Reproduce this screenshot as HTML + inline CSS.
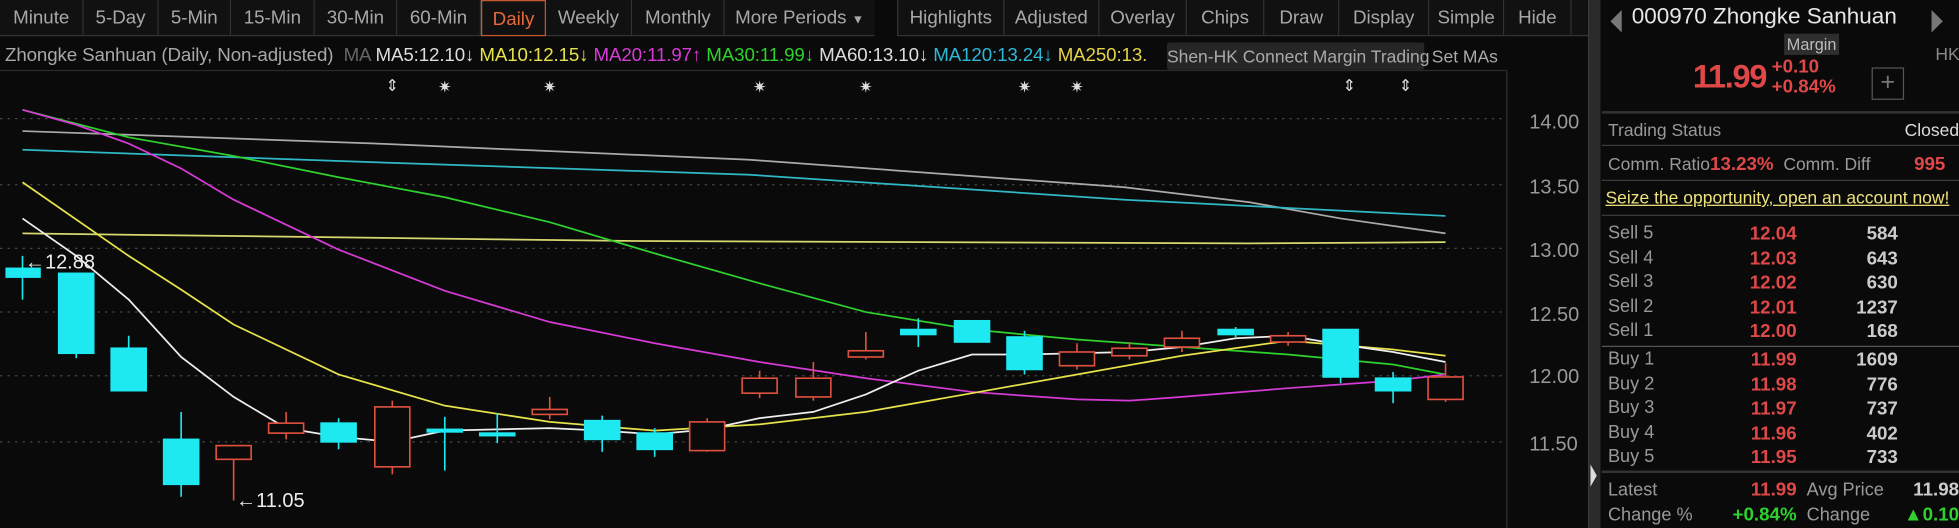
<!DOCTYPE html>
<html><head><meta charset="utf-8"><style>
html,body{margin:0;padding:0;background:#0a0a0a;overflow:hidden;width:1959px;height:528px}
#s{position:absolute;left:0;top:0;width:1568px;height:423px;transform:scale(1.2494,1.2482);transform-origin:0 0;background:#0a0a0a;font-family:"Liberation Sans Narrow","Liberation Sans",sans-serif;color:#aaa}
.tb{position:absolute;top:0;height:29px;border-right:1px solid #333;border-bottom:1px solid #333;font-size:15px;line-height:29px;text-align:center;color:#a8a8a8;box-sizing:border-box;background:#111}
.a{position:absolute;white-space:nowrap}
.rp{font-family:"Liberation Sans",sans-serif}
.hl{position:absolute;left:1282px;width:286px;height:1px;background:#3a3a3a}
</style></head><body><div id="s">
<div class="tb" style="left:0;width:67px">Minute</div>
<div class="tb" style="left:67px;width:60px">5-Day</div>
<div class="tb" style="left:127px;width:58px">5-Min</div>
<div class="tb" style="left:185px;width:67px">15-Min</div>
<div class="tb" style="left:252px;width:66px">30-Min</div>
<div class="tb" style="left:318px;width:67px">60-Min</div>
<div class="tb" style="left:385px;width:52px;color:#e8693a;border:1px solid #c5582f">Daily</div>
<div class="tb" style="left:437px;width:69px">Weekly</div>
<div class="tb" style="left:506px;width:74px">Monthly</div>
<div class="tb" style="left:580px;width:120px;border-right:none">More Periods <span style="font-size:10px">▼</span></div>
<div class="tb" style="left:700px;width:18px;background:#0a0a0a;border-right:none;border-bottom:none"></div>
<div class="tb" style="left:718px;width:86px;border-left:1px solid #333">Highlights</div>
<div class="tb" style="left:804px;width:76px">Adjusted</div>
<div class="tb" style="left:880px;width:70px">Overlay</div>
<div class="tb" style="left:950px;width:62px">Chips</div>
<div class="tb" style="left:1012px;width:60px">Draw</div>
<div class="tb" style="left:1072px;width:72px">Display</div>
<div class="tb" style="left:1144px;width:60px">Simple</div>
<div class="tb" style="left:1204px;width:54px">Hide</div>
<div class="tb" style="left:1258px;width:14px;border-right:1px solid #333"></div>
<div style="position:absolute;left:0;top:56px;width:1206px;height:1px;background:#2a2a2a"></div>
<div class="a" style="left:4px;top:36px;font-size:15px;letter-spacing:-0.1px">
<span style="color:#a8a8a8">Zhongke Sanhuan (Daily, Non-adjusted)</span>&nbsp;&nbsp;<span style="color:#666">MA</span> <span style="color:#ddd">MA5:12.10↓</span> <span style="color:#e6e24a">MA10:12.15↓</span> <span style="color:#d63bd6">MA20:11.97↑</span> <span style="color:#2ed12e">MA30:11.99↓</span> <span style="color:#ddd">MA60:13.10↓</span> <span style="color:#2fb8d6">MA120:13.24↓</span> <span style="color:#e6d24a">MA250:13.</span></div>
<div class="a" style="left:934px;top:34px;width:206px;height:22px;background:#262626;border-radius:2px;font-size:14px;line-height:22px;text-align:center;color:#aaa">Shen-HK Connect Margin Trading</div>
<div class="a" style="left:1146px;top:37px;font-size:14px;color:#aaa">Set MAs</div>
<svg class="a" style="left:0;top:0" width="1272" height="423" viewBox="0 0 1272 423">
<g stroke="#444" stroke-dasharray="2,4" stroke-width="1">
<line x1="0" y1="95" x2="1206" y2="95"/><line x1="0" y1="148" x2="1206" y2="148"/><line x1="0" y1="199" x2="1206" y2="199"/><line x1="0" y1="250" x2="1206" y2="250"/><line x1="0" y1="301" x2="1206" y2="301"/><line x1="0" y1="354" x2="1206" y2="354"/>
</g>
<line x1="1206" y1="57" x2="1206" y2="423" stroke="#333"/>
<g fill="#999" font-family="Liberation Sans Narrow,Liberation Sans,sans-serif" font-size="16">
<text x="1224" y="103">14.00</text><text x="1224" y="155">13.50</text><text x="1224" y="206">13.00</text><text x="1224" y="257">12.50</text><text x="1224" y="307">12.00</text><text x="1224" y="361">11.50</text></g>
<g fill="#ddd" font-size="13" font-family="DejaVu Sans,sans-serif" text-anchor="middle">
<text x="314" y="73">⇕</text><text x="356" y="74">✷</text><text x="440" y="74">✷</text><text x="608" y="74">✷</text><text x="693" y="74">✷</text><text x="820" y="74">✷</text><text x="862" y="74">✷</text><text x="1080" y="73">⇕</text><text x="1125" y="73">⇕</text></g>
<g fill="none" stroke-width="1.4">
<polyline stroke="#aaa" points="18,105 103,108 300,115 600,128 900,150 1000,162 1073,175 1157,187"/>
<polyline stroke="#2fb8c6" points="18,120 300,130 600,140 900,160 1157,173"/>
<polyline stroke="#d8d870" points="18,187 500,193 1000,195 1157,194"/>
<polyline stroke="#2ed12e" points="18,88 103,110 187,125 271,142 356,158 440,178 524,203 608,227 693,250 778,264 862,272 946,278 1031,284 1115,292 1157,300"/>
<polyline stroke="#d63bd6" points="18,88 61,100 103,115 145,135 187,160 271,200 356,233 440,258 524,275 608,290 693,303 778,314 862,320 904,321 946,318 1031,311 1115,305 1157,300"/>
<polyline stroke="#e6e24a" points="18,146 103,205 145,232 187,260 271,300 356,325 440,338 524,345 608,340 693,330 778,315 862,300 946,285 1031,273 1115,280 1157,285"/>
<polyline stroke="#eee" points="18,175 61,205 103,240 145,286 187,318 229,343 271,350 314,354 356,345 398,344 440,343 482,345 524,348 566,344 608,335 651,330 693,316 735,297 778,284 820,284 862,283 904,282 946,278 989,271 1031,269 1073,276 1115,282 1157,290"/>
</g>
<g stroke="#1ee8f0" fill="#1ee8f0" stroke-width="1.3">
<line x1="18" y1="205" x2="18" y2="240"/><rect x="5" y="215" width="27" height="7"/>
<line x1="61" y1="219" x2="61" y2="287"/><rect x="47" y="219" width="28" height="64"/>
<line x1="103" y1="269" x2="103" y2="313"/><rect x="89" y="279" width="28" height="34"/>
<line x1="145" y1="330" x2="145" y2="398"/><rect x="131" y="352" width="28" height="36"/>
<line x1="271" y1="335" x2="271" y2="360"/><rect x="257" y="339" width="28" height="15"/>
<line x1="356" y1="334" x2="356" y2="377"/><rect x="342" y="344" width="28" height="2"/>
<line x1="398" y1="331" x2="398" y2="355"/><rect x="384" y="347" width="28" height="2"/>
<line x1="482" y1="333" x2="482" y2="362"/><rect x="468" y="337" width="28" height="15"/>
<line x1="524" y1="343" x2="524" y2="366"/><rect x="510" y="347" width="28" height="13"/>
<line x1="735" y1="255" x2="735" y2="278"/><rect x="721" y="264" width="28" height="4"/>
<line x1="778" y1="257" x2="778" y2="274"/><rect x="764" y="257" width="28" height="17"/>
<line x1="820" y1="265" x2="820" y2="300"/><rect x="806" y="270" width="28" height="26"/>
<line x1="989" y1="262" x2="989" y2="270"/><rect x="975" y="264" width="28" height="4"/>
<line x1="1073" y1="264" x2="1073" y2="307"/><rect x="1059" y="264" width="28" height="38"/>
<line x1="1115" y1="298" x2="1115" y2="323"/><rect x="1101" y="303" width="28" height="10"/>
</g>
<g stroke="#e0503f" fill="#0a0a0a" stroke-width="1.3">
<line x1="187" y1="368" x2="187" y2="401"/><rect x="173" y="357" width="28" height="11"/>
<line x1="229" y1="330" x2="229" y2="352"/><rect x="215" y="339" width="28" height="8"/>
<line x1="314" y1="321" x2="314" y2="380"/><rect x="300" y="326" width="28" height="48"/>
<line x1="440" y1="318" x2="440" y2="336"/><rect x="426" y="328" width="28" height="4"/>
<line x1="566" y1="335" x2="566" y2="362"/><rect x="552" y="338" width="28" height="23"/>
<line x1="608" y1="297" x2="608" y2="319"/><rect x="594" y="303" width="28" height="12"/>
<line x1="651" y1="290" x2="651" y2="321"/><rect x="637" y="303" width="28" height="15"/>
<line x1="693" y1="266" x2="693" y2="288"/><rect x="679" y="281" width="28" height="5"/>
<line x1="862" y1="275" x2="862" y2="296"/><rect x="848" y="282" width="28" height="11"/>
<line x1="904" y1="274" x2="904" y2="288"/><rect x="890" y="279" width="28" height="6"/>
<line x1="946" y1="265" x2="946" y2="282"/><rect x="932" y="271" width="28" height="7"/>
<line x1="1031" y1="266" x2="1031" y2="277"/><rect x="1017" y="269" width="28" height="5"/>
<line x1="1157" y1="291" x2="1157" y2="322"/><rect x="1143" y="302" width="28" height="18"/>
</g>
<g fill="#eee" font-family="Liberation Sans Narrow,Liberation Sans,sans-serif" font-size="16">
<text x="20" y="215">←12.88</text><text x="189" y="406">←11.05</text></g>
</svg>
<div class="a" style="left:1271px;top:0;width:9px;height:423px;background:#2a2a2a;border-left:1px solid #3a3a3a"></div>
<div class="a" style="left:1273px;top:372px;width:0;height:0;border-top:9px solid transparent;border-bottom:9px solid transparent;border-left:5px solid #ddd"></div>
<div class="rp">
<div class="a" style="left:1289px;top:8px;width:0;height:0;border-top:9px solid transparent;border-bottom:9px solid transparent;border-right:9px solid #777"></div>
<div class="a" style="left:1546px;top:8px;width:0;height:0;border-top:9px solid transparent;border-bottom:9px solid transparent;border-left:9px solid #777"></div>
<div class="a" style="left:1306px;top:3px;font-size:18px;color:#e6e6e6">000970 Zhongke Sanhuan</div>
<div class="a" style="left:1428px;top:27px;width:44px;height:17px;background:#2e2e2e;font-size:13px;line-height:17px;text-align:center;color:#bbb">Margin</div>
<div class="a" style="left:1549px;top:35px;font-size:14px;color:#888">HK</div>
<div class="a" style="left:1355px;top:46px;font-size:26px;color:#e04848;letter-spacing:-1px;font-family:'Liberation Sans Narrow','Liberation Sans',sans-serif;font-weight:bold">11.99</div>
<div class="a" style="left:1418px;top:46px;font-size:15px;font-weight:bold;color:#e04848;line-height:16px">+0.10<br>+0.84%</div>
<div class="a" style="left:1498px;top:54px;width:24px;height:24px;border:1px solid #555;color:#777;font-size:20px;line-height:23px;text-align:center">+</div>
<div class="hl" style="top:89px;height:2px;background:#333"></div>
<div class="a" style="left:1287px;top:96px;font-size:14px;color:#999">Trading Status</div>
<div class="a" style="right:0;top:96px;font-size:14px;color:#ddd">Closed</div>
<div class="hl" style="top:116px"></div>
<div class="a" style="left:1287px;top:123px;font-size:14px;color:#999">Comm. Ratio<b style="color:#e04848;font-size:15px">13.23%</b>&nbsp; Comm. Diff</div>
<div class="a" style="left:1532px;top:123px;font-size:15px;font-weight:bold;color:#e04848">995</div>
<div class="hl" style="top:144px"></div>
<div class="a" style="left:1285px;top:150px;font-size:14px;color:#eee27a;text-decoration:underline">Seize the opportunity, open an account now!</div>
<div class="hl" style="top:172px"></div>
<div class="a" style="left:1287px;top:178px;font-size:14.5px;color:#999;line-height:19.6px">Sell 5<br>Sell 4<br>Sell 3<br>Sell 2<br>Sell 1</div>
<div class="a" style="left:1380px;width:58px;text-align:right;top:178px;font-size:15px;font-weight:bold;color:#e04848;line-height:19.6px">12.04<br>12.03<br>12.02<br>12.01<br>12.00</div>
<div class="a" style="left:1460px;width:59px;text-align:right;top:178px;font-size:15px;font-weight:bold;color:#ccc;line-height:19.6px">584<br>643<br>630<br>1237<br>168</div>
<div class="hl" style="top:277px;background:#555"></div>
<div class="a" style="left:1287px;top:279px;font-size:14.5px;color:#999;line-height:19.6px">Buy 1<br>Buy 2<br>Buy 3<br>Buy 4<br>Buy 5</div>
<div class="a" style="left:1380px;width:58px;text-align:right;top:279px;font-size:15px;font-weight:bold;color:#e04848;line-height:19.6px">11.99<br>11.98<br>11.97<br>11.96<br>11.95</div>
<div class="a" style="left:1460px;width:59px;text-align:right;top:279px;font-size:15px;font-weight:bold;color:#ccc;line-height:19.6px">1609<br>776<br>737<br>402<br>733</div>
<div class="hl" style="top:377px;height:2px;background:#333"></div>
<div class="a" style="left:1287px;top:383px;font-size:14.5px;color:#999;line-height:20px">Latest<br>Change %</div>
<div class="a" style="left:1370px;width:68px;text-align:right;top:383px;font-size:15px;font-weight:bold;line-height:20px"><span style="color:#e04848">11.99</span><br><span style="color:#2ed12e">+0.84%</span></div>
<div class="a" style="left:1446px;top:383px;font-size:14.5px;color:#999;line-height:20px">Avg Price<br>Change</div>
<div class="a" style="right:0;text-align:right;top:383px;font-size:15px;font-weight:bold;line-height:20px"><span style="color:#ccc">11.98</span><br><span style="color:#2ed12e">▲0.10</span></div>
</div>
</div></body></html>
